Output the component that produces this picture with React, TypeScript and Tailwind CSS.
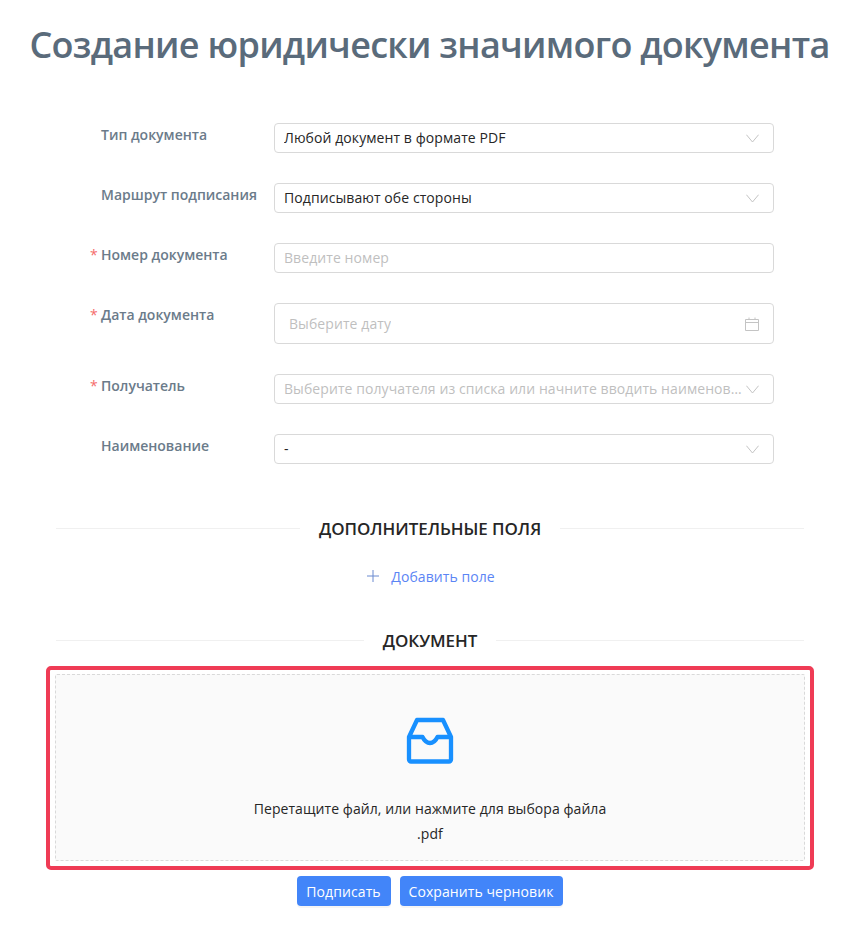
import React from "react";

const font = { fontFamily: '"Open Sans", "Noto Sans", sans-serif' };

function Chevron() {
  return (
    <svg width="13" height="9" viewBox="0 0 13 9" fill="none" className="shrink-0 text-[#c4c4c4]">
      <path d="M0.4 0.7 L6.5 8 L12.6 0.7" stroke="currentColor" strokeWidth="1" />
    </svg>
  );
}

function Calendar() {
  return (
    <svg width="14" height="14" viewBox="0 0 14 14" fill="none" className="shrink-0 text-[#c4c4c4]">
      <path d="M0.5 2.5 H13.5 V13.5 H0.5 Z M0.5 5.5 H13.5 M4 0.5 V3 M10 0.5 V3" stroke="currentColor" strokeWidth="1" />
    </svg>
  );
}

function Row({ label, required, children, pb = "pb-[30px]" }: { label: string; required?: boolean; children: React.ReactNode; pb?: string }) {
  return (
    <div className={`flex ${pb}`}>
      <div className="w-[195px] pl-[11px] pt-[1px] shrink-0 flex text-[14px] leading-[22px] font-semibold text-[#6b7b8a]">
        <span className="w-[11px] shrink-0 text-[#f56c6c] font-normal">{required ? "*" : ""}</span>
        <span>{label}</span>
      </div>
      <div className="w-[500px]">{children}</div>
    </div>
  );
}

function Field({ text, placeholder, chevron, tall }: { text: string; placeholder?: boolean; chevron?: boolean; tall?: boolean }) {
  return (
    <div className={`${tall ? "h-[41px] pl-[14px] pr-[14px]" : "h-[30px] pl-[9px] pr-[14px]"} flex items-center justify-between gap-[1px] rounded-[4px] border border-[#d9d9d9] bg-white text-[14px] tracking-[0.08px] whitespace-nowrap`}>
      <span className={`truncate pb-[1px] ${placeholder ? "text-[#bfbfbf]" : "text-[#262626]"}`}>{text}</span>
      {chevron && <Chevron />}
      {tall && <Calendar />}
    </div>
  );
}

function Divider({ title }: { title: string }) {
  return (
    <div className="flex items-center mx-[56px] w-[748px]">
      <div className="flex-1 h-px bg-[#f0f0f0]" />
      <span className="px-[19px] translate-y-px text-[17px] leading-[24px] font-semibold text-[#262626] tracking-[-0.05px]">{title}</span>
      <div className="flex-1 h-px bg-[#f0f0f0]" />
    </div>
  );
}

export default function App() {
  return (
    <div className="w-[857px] h-[942px] bg-white overflow-hidden" style={font}>
      <h1 className="pt-[20px] pl-[2px] h-[123px] text-center text-[36px] leading-[50px] font-semibold text-[#5a6b7b] whitespace-nowrap tracking-[-0.72px]">
        Создание юридически значимого документа
      </h1>
      <div className="pl-[79px]">
        <Row label="Тип документа"><Field text="Любой документ в формате PDF" chevron /></Row>
        <Row label="Маршрут подписания"><Field text="Подписывают обе стороны" chevron /></Row>
        <Row label="Номер документа" required><Field text="Введите номер" placeholder /></Row>
        <Row label="Дата документа" required><Field text="Выберите дату" placeholder tall /></Row>
        <Row label="Получатель" required><Field text="Выберите получателя из списка или начните вводить наименование" placeholder chevron /></Row>
        <Row label="Наименование" pb="pb-[52px]"><Field text="-" chevron /></Row>
      </div>
      <Divider title="ДОПОЛНИТЕЛЬНЫЕ ПОЛЯ" />
      <div className="flex items-center justify-center gap-[12px] pl-[5px] mt-[25px] mb-[41px] h-[22px] text-[14px] text-[#5b85f5] tracking-[0.08px]">
        <svg width="12" height="12" viewBox="0 0 12 12" fill="none" className="text-[#6a8ad0]">
          <path d="M6 0 V12 M0 6 H12" stroke="currentColor" strokeWidth="1" />
        </svg>
        <span>Добавить поле</span>
      </div>
      <Divider title="ДОКУМЕНТ" />
      <div className="mx-[46px] mt-[14px] w-[768px] h-[204px] rounded-[5px] border-[4px] border-[#ef3b55] px-[5px] pt-[4px] pb-[5px]">
        <div className="h-full border border-dashed border-[#d9d9d9] rounded-[2px] bg-[#fafafa] flex flex-col items-center pt-[41px]">
          <svg width="48" height="48" viewBox="0 0 48 48" fill="none" className="text-[#1890ff]">
            <path
              d="M3 21 L11 4 H37 L45 21 V43.5 A2 2 0 0 1 43 45.5 H5 A2 2 0 0 1 3 43.5 Z M3 21 H16.5 C18 24 20 27 24 27 C28 27 30 24 31.5 21 H45"
              stroke="currentColor"
              strokeWidth="4.3"
              strokeLinejoin="round"
            />
          </svg>
          <p className="mt-[32px] text-[14px] leading-[25px] text-[#262626] tracking-[0.07px]">Перетащите файл, или нажмите для выбора файла</p>
          <p className="text-[14px] leading-[25px] text-[#262626] tracking-[0.07px]">.pdf</p>
        </div>
      </div>
      <div className="flex justify-center gap-[9px] pl-[2px] mt-[6px] text-[14px] text-white tracking-[0.08px]">
        <button className="w-[94px] h-[30px] rounded-[4px] bg-[#4285f9] shadow-[0_2px_0_rgba(0,0,0,0.04)]">Подписать</button>
        <button className="w-[163px] h-[30px] rounded-[4px] bg-[#4285f9] shadow-[0_2px_0_rgba(0,0,0,0.04)]">Сохранить черновик</button>
      </div>
    </div>
  );
}
